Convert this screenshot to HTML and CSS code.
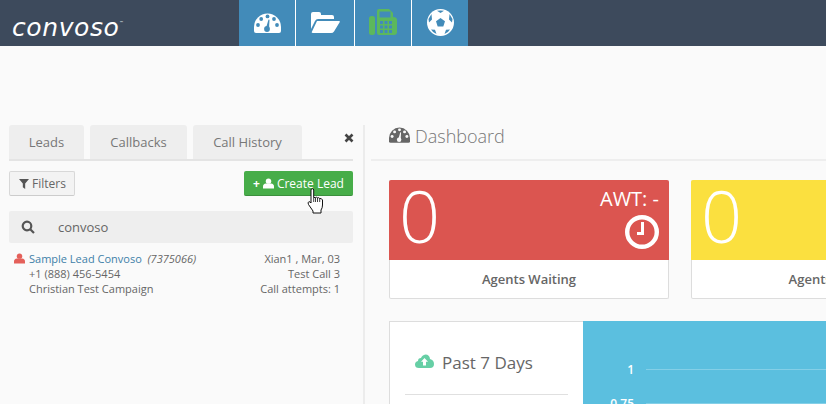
FILE: index.html
```html
<!DOCTYPE html>
<html lang="en">
<head>
<meta charset="utf-8">
<title>Convoso Dashboard</title>
<link rel="stylesheet" href="styles.css">
</head>
<body>
<header class="topbar">
  <div class="logo">convoso<span class="tm">™</span></div>
  <nav class="nav">
    <a class="nav-item nav-a">
      <svg width="27" height="20" viewBox="0 0 27 20"><path class="shape" d="M0 14A13.5 13.5 0 0 1 27 14V18Q27 20 25 20H2Q0 20 0 18Z"/><g class="hole"><circle cx="4" cy="12" r="1.9"/><circle cx="7.2" cy="6" r="1.9"/><circle cx="13.5" cy="3.4" r="1.9"/><circle cx="20" cy="6" r="1.9"/><circle cx="23" cy="12" r="1.9"/><circle cx="13" cy="16" r="2.9"/><path d="M12 15L14.5 6.5L15.5 6.8L15 16Z"/></g></svg>
    </a>
    <a class="nav-item nav-b">
      <svg class="lift" width="29" height="21" viewBox="0 0 29 21"><path class="shape" d="M0 2Q0 0 2 0H8Q10 0 10 2V3H21Q23 3 23 5V7H7Q5 7 4 9L0 17Z"/><path class="shape" d="M6 9H28Q29.500 9 28.500 10.500L23 19.500Q22 21 20 21H2Q0 21 1 19.500Z"/></svg>
    </a>
    <a class="nav-item nav-c">
      <svg class="lift" width="28" height="26" viewBox="0 0 28 26"><rect class="green" x="0" y="7" width="6" height="19" rx="2.500"/><path class="green" d="M8 2Q8 0 10 0H20L24 4V8Q28 8 28 11V23Q28 26 25 26H10Q8 26 8 24Z"/><g class="hole"><rect x="10.500" y="2.500" width="11" height="6"/><rect x="11" y="12" width="3" height="3"/><rect x="15.500" y="12" width="3" height="3"/><rect x="20" y="12" width="3" height="3"/><rect x="11" y="16.500" width="3" height="3"/><rect x="15.500" y="16.500" width="3" height="3"/><rect x="20" y="16.500" width="3" height="3"/><rect x="11" y="21" width="3" height="3"/><rect x="15.500" y="21" width="3" height="3"/><rect x="20" y="21" width="3" height="3"/></g></svg>
    </a>
    <a class="nav-item nav-d">
      <svg class="lift-small" width="27" height="27" viewBox="0 0 27 27"><circle class="shape" cx="13.500" cy="13.500" r="13.500"/><g class="hole"><path d="M13.500 9L18 12.300L16.300 17.500H10.700L9 12.300Z"/><path d="M10 1.800Q13.500 1 17 1.800L13.500 4Z"/><path d="M22.500 5L25.500 10L25 13.500L22 10.500Z"/><path d="M4.500 5L1.500 10L2 13.500L5 10.500Z"/><path d="M4 20.500L8 20.800L9.500 25Q6 24 4 20.500Z"/><path d="M23 20.500L19 20.800L17.500 25Q21 24 23 20.500Z"/></g></svg>
    </a>
  </nav>
</header>

<main class="layout">
  <section class="leads-pane">
    <div class="tabs">
      <div class="tab tab-leads">Leads</div>
      <div class="tab tab-callbacks">Callbacks</div>
      <div class="tab tab-history">Call History</div>
      <svg class="close" width="10" height="10" viewBox="0 0 10 10"><path d="M1.500 1.500L8.500 8.500M8.500 1.500L1.500 8.500"/></svg>
    </div>
    <div class="actions">
      <button class="btn btn-filter">
        <svg width="10" height="10" viewBox="0 0 11 11"><path d="M0 0H11L6.800 5V11L4.200 9V5Z"/></svg>
        Filters
      </button>
      <button class="btn btn-create">
        <span class="plus">+</span>
        <svg width="11" height="11" viewBox="0 0 13 12"><circle cx="6.500" cy="3.200" r="3.200"/><path d="M0 12V9.500Q0 6.500 3.500 6H9.500Q13 6.500 13 9.500V12Z"/></svg>
        Create Lead
      </button>
      <svg class="hand" width="18" height="26" viewBox="0 0 18 26"><path d="M4 2Q4 .7 5.300 .7T6.700 2V9.500L8.500 9.500Q9.500 8.800 10.500 9.800Q11.800 9.300 12.700 10.500Q14.500 10 15.500 12V17Q15.500 20 14 22V25H6V23L1.500 16.500Q.5 14.500 1.800 13.800Q3 13.300 4 15Z"/><path class="detail" d="M8.500 10V14M10.500 10V14M12.700 10.500V14M6.700 9.500V14"/></svg>
    </div>
    <div class="search">
      <svg width="14" height="14" viewBox="0 0 14 14"><circle cx="6" cy="6" r="4.300"/><path d="M9.200 9.200L13 13"/></svg>
      <span>convoso</span>
    </div>
    <div class="result">
      <svg class="person" width="11" height="11" viewBox="0 0 13 12"><circle cx="6.500" cy="3.200" r="3.200"/><path d="M0 12V9.500Q0 6.500 3.500 6H9.500Q13 6.500 13 9.500V12Z"/></svg>
      <div class="result-main">
        <div><span class="lead-name">Sample Lead Convoso</span>&nbsp; <em class="lead-id">(7375066)</em></div>
        <div>+1 (888) 456-5454</div>
        <div>Christian Test Campaign</div>
      </div>
      <div class="result-side">
        <div>Xian1 , Mar, 03</div>
        <div>Test Call 3</div>
        <div>Call attempts: 1</div>
      </div>
    </div>
  </section>

  <section class="dash">
    <h1 class="dash-title">
      <svg width="21" height="16" viewBox="0 0 27 20"><path d="M0 14A13.500 13.500 0 0 1 27 14V18Q27 20 25 20H2Q0 20 0 18Z"/><g class="title-hole"><circle cx="4" cy="12" r="1.900"/><circle cx="7.200" cy="6" r="1.900"/><circle cx="13.500" cy="3.400" r="1.900"/><circle cx="20" cy="6" r="1.900"/><circle cx="23" cy="12" r="1.900"/><circle cx="13" cy="16" r="2.900"/><path d="M12 15L14.500 6.500L15.500 6.800L15 16Z"/></g></svg>
      Dashboard
    </h1>
    <div class="cards">
      <article class="card">
        <div class="card-top red">
          <span class="big">0</span>
          <div class="awt">
            <span>AWT: -</span>
            <svg width="34" height="34" viewBox="0 0 34 34"><circle cx="17" cy="17" r="14.800"/><path d="M17.500 7V18.500H12"/></svg>
          </div>
        </div>
        <div class="card-label">Agents Waiting</div>
      </article>
      <article class="card">
        <div class="card-top yellow"><span class="big">0</span></div>
        <div class="card-label">Agents Ready</div>
      </article>
    </div>
    <article class="week">
      <div class="week-side">
        <div class="week-head">
          <svg width="19" height="14" viewBox="0 0 19 14"><path d="M4 14Q0 14 0 10.500Q0 7.500 3 7Q3 4 6 4Q7 1 10.500 .5Q14.500 .5 15 5Q19 6 19 10Q19 14 15 14Z"/><path class="cloud-arrow" d="M9.500 4L13 7.800H11V11.500H8V7.800H6Z"/></svg>
          Past 7 Days
        </div>
        <div class="week-rule"></div>
      </div>
      <div class="chart">
        <div class="chart-row"><span>1</span><i></i></div>
        <div class="chart-row"><span>0.75</span><i></i></div>
      </div>
    </article>
  </section>
</main>
</body>
</html>
```
FILE: styles.css
```css
* { box-sizing: border-box; }
html, body { margin: 0; padding: 0; height: 100%; }
body {
  width: 826px;
  height: 404px;
  overflow: hidden;
  background: #fafafa;
  color: #666;
  font-family: "Open Sans", "Liberation Sans", sans-serif;
}
.topbar {
  display: flex;
  height: 46px;
  background: #3d4a5c;
}
.logo {
  width: 239px;
  padding-left: 12px;
  color: #fff;
  font: oblique 400 25px/46px "DejaVu Sans", sans-serif;
  letter-spacing: .6px;
}
.tm { font-size: 4px; vertical-align: 12px; font-style: normal; }
.nav { display: flex; gap: 1px; background: #fff; }
.nav-item {
  display: flex;
  align-items: center;
  justify-content: center;
  height: 46px;
  background: #428bb9;
}
.nav-a { width: 56px; }
.nav-b { width: 58px; }
.nav-c { width: 56px; }
.nav-d { width: 56px; }
.lift { margin-bottom: 2px; }
.lift-small { margin-bottom: 1px; }
.shape { fill: #fff; }
.hole { fill: #428bb9; }
.green { fill: #5cb85c; }

.layout { display: flex; height: 358px; }
.leads-pane {
  flex: 0 0 365px;
  margin-top: 79px;
  padding: 0 10px 0 9px;
  border-right: 2px solid #ececec;
}
.tabs {
  position: relative;
  display: flex;
  height: 36px;
  gap: 6px;
  border-bottom: 2px solid #e4e4e4;
}
.tab {
  height: 34px;
  background: #eeeeee;
  color: #777;
  font-size: 13px;
  line-height: 35px;
  text-align: center;
  border-radius: 3px 3px 0 0;
}
.tab-leads { width: 75px; }
.tab-callbacks { width: 97px; }
.tab-history { width: 109px; }
.close {
  position: absolute;
  right: -1px;
  top: 8px;
  fill: none;
  stroke: #444;
  stroke-width: 2.600;
}
.actions {
  position: relative;
  display: flex;
  justify-content: space-between;
  margin-top: 10px;
}
.btn {
  display: flex;
  align-items: center;
  height: 25px;
  border-radius: 2px;
  font-family: "Open Sans", sans-serif;
  font-size: 12px;
  padding: 0;
}
.btn-filter {
  width: 66px;
  gap: 3px;
  padding-left: 9px;
  background: #f3f3f3;
  border: 1px solid #d8d8d8;
  border-bottom-color: #ccc;
  color: #666;
}
.btn-filter svg { fill: #555; }
.btn-create {
  width: 109px;
  gap: 3px;
  padding-left: 9px;
  background: #47ad49;
  border: 0;
  border-bottom: 1px solid #3b8f3d;
  color: #fff;
}
.btn-create svg { fill: #fff; }
.plus { font-weight: 700; }
.hand {
  position: absolute;
  left: 298px;
  top: 17px;
  fill: #fff;
  stroke: #111;
  stroke-width: 1;
}
.hand .detail { fill: none; stroke-width: .8; }
.search {
  display: flex;
  align-items: center;
  gap: 23px;
  height: 32px;
  margin-top: 15px;
  padding-left: 12px;
  background: #eeeeee;
  border-radius: 2px;
  color: #666;
  font-size: 13px;
}
.search svg { fill: none; stroke: #555; stroke-width: 2.200; flex: none; }
.result {
  display: flex;
  margin-top: 8px;
  padding: 0 13px 0 5px;
  font-size: 11px;
  line-height: 15px;
  color: #666;
}
.person { fill: #e4605a; margin: 2px 4px 0 0; flex: none; }
.result-main { flex: 1; }
.result-side { text-align: right; }
.lead-name { color: #4080a8; }
.lead-id { color: #666; }

.dash { flex: 1; min-width: 0; padding-left: 6px; padding-top: 79px; }
.dash-title {
  display: flex;
  align-items: flex-start;
  gap: 5px;
  height: 36px;
  margin: 0;
  padding: 0 0 0 18px;
  border-bottom: 2px solid #eee;
  color: #777;
  font-size: 18px;
  line-height: 22px;
  font-weight: 300;
}
.dash-title svg { fill: #666; margin-top: 2px; flex: none; }
.title-hole { fill: #fafafa; }
.cards {
  display: flex;
  gap: 22px;
  margin: 19px 0 0 18px;
  width: 582px;
}
.card {
  flex: 0 0 280px;
  height: 119px;
  background: #fff;
  border: 1px solid #ddd;
  border-top: 0;
  border-radius: 2px;
}
.card-top {
  display: flex;
  justify-content: space-between;
  height: 80px;
  margin: 0 -1px;
  padding: 0 10px 0 10px;
  border-radius: 2px 2px 0 0;
  color: #fff;
}
.red { background: #db5550; }
.yellow { background: #fbe03f; }
.big { font-size: 72px; font-weight: 300; line-height: 70px; }
.awt {
  display: flex;
  flex-direction: column;
  align-items: flex-end;
  font-size: 20px;
  line-height: 24px;
  padding-top: 7px;
}
.awt svg {
  margin: 4px 0 0 0;
  fill: none;
  stroke: #fff;
}
.awt svg circle { stroke-width: 4.400; }
.awt svg path { stroke-width: 3; }
.card-label {
  text-align: center;
  font-size: 13px;
  font-weight: 600;
  line-height: 38px;
  color: #666;
}
.week {
  display: flex;
  width: 800px;
  height: 140px;
  margin: 22px 0 0 18px;
  background: #fff;
  border: 1px solid #ddd;
}
.week-side { flex: 0 0 193px; padding: 0 15px; }
.week-head {
  display: flex;
  align-items: center;
  gap: 8px;
  height: 72px;
  padding: 8px 0 0 10px;
  color: #666;
  font-size: 17px;
}
.week-head svg { fill: #66cfa5; margin-top: -3px; }
.cloud-arrow { fill: #fff; }
.week-rule { border-top: 1px solid #e0e0e0; }
.chart {
  flex: 1;
  margin: -1px -1px -1px 0;
  padding-top: 31px;
  background: #5bbfdf;
}
.chart-row {
  display: flex;
  align-items: center;
  gap: 12px;
  height: 34px;
  color: #fff;
  font-size: 12px;
  font-weight: 600;
}
.chart-row span { width: 51px; text-align: right; }
.chart-row i { flex: 1; height: 1px; background: rgba(255, 255, 255, .25); }
```
